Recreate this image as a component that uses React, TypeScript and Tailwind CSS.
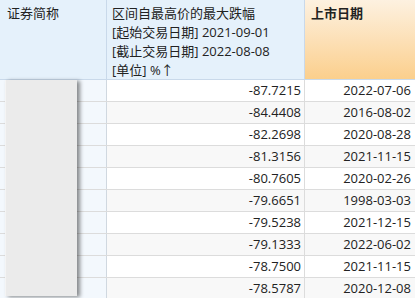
import React from 'react';

const rows = [
  ['-87.7215', '2022-07-06'],
  ['-84.4408', '2016-08-02'],
  ['-82.2698', '2020-08-28'],
  ['-81.3156', '2021-11-15'],
  ['-80.7605', '2020-02-26'],
  ['-79.6651', '1998-03-03'],
  ['-79.5238', '2021-12-15'],
  ['-79.1333', '2022-06-02'],
  ['-78.7500', '2021-11-15'],
  ['-78.5787', '2020-12-08'],
];

export default function App() {
  return (
    <div
      className="relative w-[415px] h-[298px] overflow-hidden bg-white text-[13px] text-[#222]"
      style={{ fontFamily: '"Open Sans", "Noto Sans CJK SC", sans-serif' }}
    >
      {/* header */}
      <div className="flex h-[80px] border-b border-[#c9d9ea]">
        <div className="w-[107px] shrink-0 bg-[#e5f1fb] border-r border-[#c9d9ea] px-[7px] pt-[4px] leading-[19px]">
          证券简称
        </div>
        <div className="w-[198px] shrink-0 bg-[#e5f1fb] border-r border-[#c9d9ea] px-[5px] pt-[4px] leading-[19px]">
          <div>区间自最高价的最大跌幅</div>
          <div>[起始交易日期] 2021-09-01</div>
          <div>[截止交易日期] 2022-08-08</div>
          <div>[单位] %↑</div>
        </div>
        <div className="flex-1 bg-gradient-to-b from-[#fdf1e0] to-[#fbcf8c] px-[6px] pt-[4px] leading-[19px] font-bold">
          上市日期
        </div>
      </div>

      {/* rows */}
      {rows.map(([v, d], i) => (
        <div
          key={i}
          className={`flex h-[22px] border-b border-[#dcdcdc] leading-[21px] ${i % 2 ? 'bg-[#f8f8f8]' : 'bg-white'}`}
        >
          <div className="w-[107px] shrink-0 bg-[#f3f8fd] border-r border-[#d0d8e0]" />
          <div className="w-[198px] shrink-0 border-r border-[#dcdcdc] text-right pr-[3px]">{v}</div>
          <div className="flex-1 text-right pr-[4px]">{d}</div>
        </div>
      ))}

      {/* masking overlay */}
      <div className="absolute left-[5px] top-[80px] w-[72px] h-[216px] bg-[#ebebeb] border-l border-[#f4f4f4] shadow-[3px_1px_4px_rgba(0,0,0,0.45)]" />
    </div>
  );
}
